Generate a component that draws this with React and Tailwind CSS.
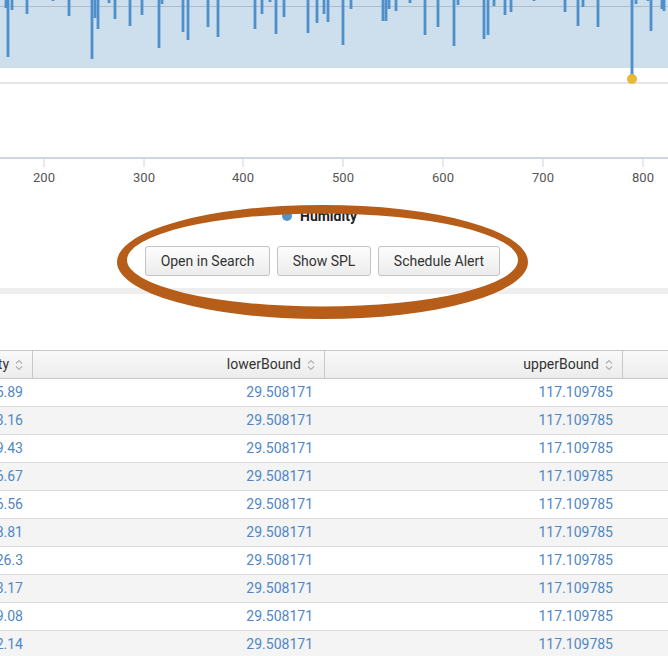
import React from "react";

const spikes = [
  [6, 8], [8, 57], [12, 10], [27, 14], [53, 1], [69, 16], [92, 59], [95, 18], [98, 29], [109, 3], [115, 19], [130, 26], [142, 15], [159, 48], [162, 4],
  [183, 32], [188, 40], [208, 27], [218, 37], [255, 29], [262, 14], [270, 2], [276, 34], [284, 17], [308, 33], [317, 23], [324, 14], [328, 22],
  [343, 45], [351, 9], [383, 21], [386, 21], [389, 9], [396, 11], [410, 3], [425, 35], [438, 27], [454, 46], [458, 5], [484, 39], [488, 35], [494, 6], [505, 15],
  [511, 12], [534, 1], [565, 12], [578, 26], [583, 7], [598, 27], [636, 4], [648, 1], [651, 31], [662, 9], [664, 11],
];

const ticks = [
  [44, "200"], [144, "300"], [243, "400"], [343, "500"], [443, "600"], [543, "700"], [643, "800"],
];

const rows = [
  "65.89", "43.16", "39.43", "56.67", "46.56", "38.81", "26.3", "43.17", "59.08", "42.14",
];

function SortIcon() {
  return (
    <svg width="8" height="12" viewBox="0 0 8 12" className="shrink-0">
      <path d="M1 4.5 L4 1.5 L7 4.5" fill="none" stroke="#b0b0b0" strokeWidth="1.1" />
      <path d="M1 7.5 L4 10.5 L7 7.5" fill="none" stroke="#b0b0b0" strokeWidth="1.1" />
    </svg>
  );
}

function Chart() {
  return (
    <svg width="668" height="200" className="block">
      <rect x="0" y="0" width="668" height="68" fill="#cddeed" />
      <line x1="0" y1="6.5" x2="668" y2="6.5" stroke="#aebccc" strokeWidth="1" />
      <line x1="0" y1="83" x2="668" y2="83" stroke="#dcdcdc" strokeWidth="1.5" />
      {spikes.map(([x, y], i) => (
        <line key={i} x1={x} y1="0" x2={x} y2={y} stroke="#5090ca" strokeWidth="2.8" />
      ))}
      <line x1="632" y1="0" x2="632" y2="79" stroke="#5090ca" strokeWidth="2.8" />
      <circle cx="632" cy="79" r="5" fill="#e8b935" />
      <line x1="0" y1="158" x2="668" y2="158" stroke="#ccd6e6" strokeWidth="2" />
      {ticks.map(([x, t]) => (
        <g key={t}>
          <line x1={x} y1="158" x2={x} y2="167" stroke="#ccd6e6" strokeWidth="1" />
          <text x={x} y="182" textAnchor="middle" fontSize="13" fill="#555" fontFamily="Roboto, 'Open Sans', sans-serif">
            {t}
          </text>
        </g>
      ))}
    </svg>
  );
}

function Btn({ w, children }) {
  return (
    <button
      className={`h-[30px] ${w} flex items-center justify-center rounded-[3px] border border-[#c3c3c3] bg-gradient-to-b from-[#fdfdfd] to-[#ececec] text-[14px] text-[#333]`}
    >
      {children}
    </button>
  );
}

export default function App() {
  return (
    <div
      className="relative w-[668px] h-[656px] overflow-hidden bg-white"
      style={{ fontFamily: "Roboto, 'Helvetica Neue', Arial, sans-serif" }}
    >
      <Chart />
      <div className="h-[32px] pl-[282px] flex items-center gap-[8px]">
        <span className="w-[10px] h-[10px] rounded-full bg-[#5592cb]" />
        <span className="text-[14px] font-bold text-[#222]">Humidity</span>
      </div>
      <div className="mt-[14px] pl-[145px] flex gap-[7px]">
        <Btn w="w-[125px]">Open in Search</Btn>
        <Btn w="w-[94px]">Show SPL</Btn>
        <Btn w="w-[122px]">Schedule Alert</Btn>
      </div>
      <div className="mt-[12px] h-[6px] bg-[#eeeeee]" />
      <div className="mt-[56px] text-[14px]">
        <div className="grid grid-cols-[33px_292px_298px_1fr] h-[29px] border-y border-[#c8c8c8] bg-gradient-to-b from-[#f9f9f9] to-[#ececec] text-[#333]">
          <div className="flex items-center justify-end gap-[6px] pr-[9px] border-r border-[#c8c8c8] overflow-hidden whitespace-nowrap">
            <span>Humidity</span>
            <SortIcon />
          </div>
          <div className="flex items-center justify-end gap-[6px] pr-[9px] border-r border-[#c8c8c8]">
            <span>lowerBound</span>
            <SortIcon />
          </div>
          <div className="flex items-center justify-end gap-[6px] pr-[9px] border-r border-[#c8c8c8]">
            <span>upperBound</span>
            <SortIcon />
          </div>
          <div />
        </div>
        {rows.map((v, i) => (
          <div
            key={i}
            className={`grid grid-cols-[33px_292px_298px_1fr] h-[28px] border-b border-[#dcdcdc] text-[#4f87c6] ${
              i % 2 === 1 ? "bg-[#f4f4f4]" : "bg-white"
            }`}
          >
            <div className="flex items-center justify-end pr-[10px] overflow-hidden whitespace-nowrap">{v}</div>
            <div className="flex items-center justify-end pr-[12px]">29.508171</div>
            <div className="flex items-center justify-end pr-[10px]">117.109785</div>
            <div />
          </div>
        ))}
      </div>
      <svg className="absolute left-0 top-0 pointer-events-none" width="668" height="656">
        <path
          fillRule="evenodd"
          fill="#b55d19"
          d="M117 262 A205.5 57 0 1 0 528 262 A205.5 57 0 1 0 117 262 Z M127 260 A195.5 46.5 0 1 0 518 260 A195.5 46.5 0 1 0 127 260 Z"
        />
      </svg>
    </div>
  );
}
